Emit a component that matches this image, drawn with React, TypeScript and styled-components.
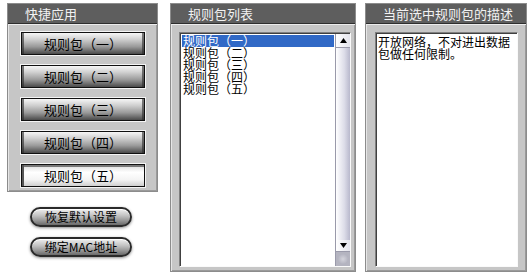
import React from "react";
import styled, { createGlobalStyle } from "styled-components";

const GlobalStyle = createGlobalStyle`
  html, body {
    margin: 0;
    padding: 0;
    background: #ffffff;
  }
  body {
    font-family: "Noto Sans CJK SC", "Liberation Sans", sans-serif;
  }
`;

const Page = styled.div`
  display: flex;
  align-items: flex-start;
  padding: 3px 0 0 7px;
  width: 530px;
  height: 275px;
  box-sizing: border-box;
`;

const Column = styled.div<{ $width: number; $gap?: number }>`
  display: flex;
  flex-direction: column;
  width: ${(p) => p.$width}px;
  margin-left: ${(p) => p.$gap ?? 0}px;
  flex-shrink: 0;
`;

const Panel = styled.section<{ $height: number }>`
  display: flex;
  flex-direction: column;
  height: ${(p) => p.$height}px;
  box-sizing: border-box;
  background: #c6c6c6;
  border: 1px solid #8c8c8c;
  box-shadow: inset 1px 1px 0 #e6e6e6, inset -1px -1px 0 #9a9a9a;
`;

const PanelHeader = styled.header`
  height: 19px;
  line-height: 19px;
  padding-left: 17px;
  background: #5e5e5e;
  color: #f2f2f2;
  font-size: 13px;
  border-bottom: 1px solid #2e2e2e;
  box-shadow: 0 1px 0 #ececec;
  flex-shrink: 0;
`;

const ButtonStack = styled.div`
  display: flex;
  flex-direction: column;
  gap: 10px;
  padding: 8px 0 0 13px;
`;

const PackButton = styled.button<{ $active?: boolean }>`
  width: 124px;
  height: 23px;
  padding: 0;
  font-family: "Noto Sans CJK SC", sans-serif;
  font-size: 13px;
  color: #000;
  border: 1px solid #101010;
  outline: 1px solid #f4f4f4;
  background: ${(p) =>
    p.$active
      ? "linear-gradient(to bottom, #d8d8d8 0%, #ffffff 35%, #f4f4f4 70%, #cfcfcf 100%)"
      : "linear-gradient(to bottom, #f6f6f6 0%, #d0d0d0 30%, #9a9a9a 65%, #4a4a4a 100%)"};
  box-shadow: ${(p) =>
    p.$active
      ? "inset 2px 0 0 #555, inset 0 2px 0 #777"
      : "inset 2px 0 0 rgba(40,40,40,.6), inset -2px 0 0 rgba(40,40,40,.6)"};
  cursor: pointer;
`;

const PillStack = styled.div`
  display: flex;
  flex-direction: column;
  gap: 10px;
  padding: 15px 0 0 23px;
`;

const PillButton = styled.button`
  width: 102px;
  height: 20px;
  padding: 0;
  font-family: "Noto Sans CJK SC", sans-serif;
  font-size: 12px;
  line-height: 16px;
  color: #000;
  border: 2px solid #2a2a2a;
  border-radius: 10px;
  background: linear-gradient(to bottom, #f0f0f0 0%, #c4c4c4 40%, #9a9a9a 70%, #6a6a6a 100%);
  box-shadow: 0 1px 3px rgba(0, 0, 0, 0.45), inset 0 1px 0 #ffffff;
  cursor: pointer;
`;

const Inset = styled.div<{ $left: number; $right: number }>`
  display: flex;
  flex: 1;
  margin: 8px ${(p) => p.$right}px 4px ${(p) => p.$left}px;
  border-top: 1px solid #808080;
  border-left: 1px solid #808080;
  border-right: 1px solid #fafafa;
  border-bottom: 1px solid #fafafa;
  min-height: 0;
`;

const ListBox = styled.ul`
  flex: 1;
  margin: 0;
  padding: 1px 1px 0 1px;
  list-style: none;
  background: #ffffff;
  border-top: 1px solid #404040;
  border-left: 1px solid #404040;
`;

const ListItem = styled.li<{ $selected?: boolean }>`
  height: 12px;
  line-height: 12px;
  font-size: 12px;
  padding-left: 1px;
  color: ${(p) => (p.$selected ? "#ffffff" : "#000000")};
  background: ${(p) => (p.$selected ? "#3169c6" : "transparent")};
`;

const ScrollBar = styled.div`
  display: flex;
  flex-direction: column;
  width: 15px;
  border-top: 1px solid #404040;
  background: #c6c6c6;
`;

const ScrollArrow = styled.div<{ $height: number }>`
  display: flex;
  align-items: center;
  justify-content: center;
  height: ${(p) => p.$height}px;
  background: linear-gradient(to right, #ffffff, #e4e4ec);
  border-bottom: 1px solid #9a9aaa;
  border-left: 1px solid #9a9aaa;
  box-sizing: border-box;
`;

const ScrollTrack = styled.div`
  flex: 1;
  background: linear-gradient(to right, #ffffff 0%, #dcdce8 60%, #b8b8cc 100%);
  border-left: 1px solid #9a9aaa;
`;

const ScrollCorner = styled.div`
  height: 14px;
  display: flex;
  align-items: center;
  justify-content: center;
  background: #b4b4c0;
  border-left: 1px solid #9a9aaa;
`;

const CornerDot = styled.div`
  width: 10px;
  height: 10px;
  border-radius: 50%;
  background: radial-gradient(circle, #d4d4dc 0%, #a8a8b6 100%);
`;

const TextBox = styled.div`
  flex: 1;
  padding: 2px 1px 0 1px;
  background: #ffffff;
  border-top: 1px solid #404040;
  border-left: 1px solid #404040;
  font-size: 12px;
  line-height: 12px;
  color: #000;
`;

const Arrow = ({ up }: { up?: boolean }) => (
  <svg width="7" height="5" viewBox="0 0 7 5">
    <path d={up ? "M3.5 0 L7 5 L0 5 Z" : "M0 0 L7 0 L3.5 5 Z"} fill="#000" />
  </svg>
);

const packs = ["规则包（一）", "规则包（二）", "规则包（三）", "规则包（四）", "规则包（五）"];

export default function App() {
  return (
    <>
      <GlobalStyle />
      <Page>
        <Column $width={151}>
          <Panel $height={189}>
            <PanelHeader>快捷应用</PanelHeader>
            <ButtonStack>
              {packs.map((p, i) => (
                <PackButton key={p} $active={i === 4}>
                  {p}
                </PackButton>
              ))}
            </ButtonStack>
          </Panel>
          <PillStack>
            <PillButton>恢复默认设置</PillButton>
            <PillButton>绑定MAC地址</PillButton>
          </PillStack>
        </Column>
        <Column $width={186} $gap={12}>
          <Panel $height={269}>
            <PanelHeader>规则包列表</PanelHeader>
            <Inset $left={8} $right={4}>
              <ListBox>
                {packs.map((p, i) => (
                  <ListItem key={p} $selected={i === 0}>
                    {p}
                  </ListItem>
                ))}
              </ListBox>
              <ScrollBar>
                <ScrollArrow $height={14}>
                  <Arrow up />
                </ScrollArrow>
                <ScrollTrack />
                <ScrollArrow $height={12}>
                  <Arrow />
                </ScrollArrow>
                <ScrollCorner>
                  <CornerDot />
                </ScrollCorner>
              </ScrollBar>
            </Inset>
          </Panel>
        </Column>
        <Column $width={162} $gap={9}>
          <Panel $height={269}>
            <PanelHeader>当前选中规则包的描述</PanelHeader>
            <Inset $left={9} $right={8}>
              <TextBox>开放网络，不对进出数据包做任何限制。</TextBox>
            </Inset>
          </Panel>
        </Column>
      </Page>
    </>
  );
}
